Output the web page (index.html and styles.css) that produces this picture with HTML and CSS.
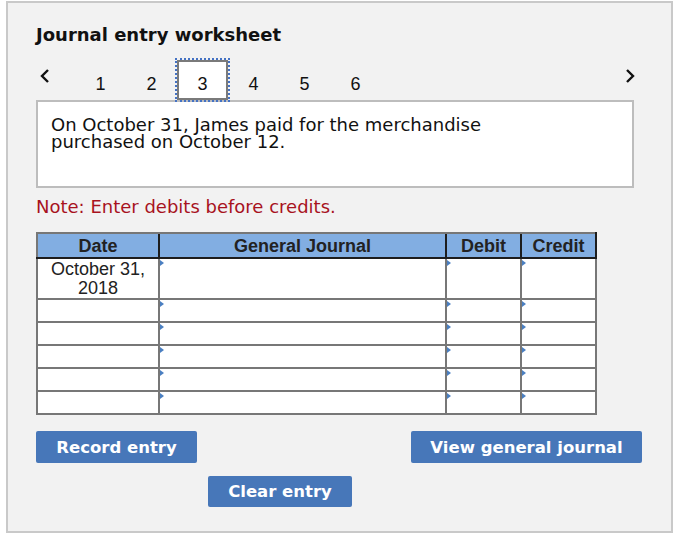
FILE: index.html
```html
<!DOCTYPE html>
<html>
<head>
<meta charset="utf-8">
<link rel="stylesheet" href="styles.css">
</head>
<body>
<div class="panel">
  <h1 class="title">Journal entry worksheet</h1>
  <div class="tabs">
    <span class="arrow"><svg width="12" height="16" viewBox="0 0 12 16"><polyline points="9,2 3,8 9,14" fill="none" stroke="#111" stroke-width="2.4"/></svg></span>
    <div class="nums">
      <span class="tab">1</span>
      <span class="tab">2</span>
      <span class="tab active">3</span>
      <span class="tab">4</span>
      <span class="tab">5</span>
      <span class="tab">6</span>
    </div>
    <span class="arrow right"><svg width="12" height="16" viewBox="0 0 12 16"><polyline points="3,2 9,8 3,14" fill="none" stroke="#111" stroke-width="2.4"/></svg></span>
  </div>
  <div class="question">On October 31, James paid for the merchandise<br>purchased on October 12.</div>
  <p class="note">Note: Enter debits before credits.</p>
  <table class="journal">
    <thead>
      <tr><th class="c-date">Date</th><th class="c-gj">General Journal</th><th class="c-dr">Debit</th><th class="c-cr">Credit</th></tr>
    </thead>
    <tbody>
      <tr class="first"><td class="date">October 31,<br>2018</td><td><i class="tri"></i></td><td><i class="tri"></i></td><td><i class="tri"></i></td></tr>
      <tr><td></td><td><i class="tri"></i></td><td><i class="tri"></i></td><td><i class="tri"></i></td></tr>
      <tr><td></td><td><i class="tri"></i></td><td><i class="tri"></i></td><td><i class="tri"></i></td></tr>
      <tr><td></td><td><i class="tri"></i></td><td><i class="tri"></i></td><td><i class="tri"></i></td></tr>
      <tr><td></td><td><i class="tri"></i></td><td><i class="tri"></i></td><td><i class="tri"></i></td></tr>
      <tr><td></td><td><i class="tri"></i></td><td><i class="tri"></i></td><td><i class="tri"></i></td></tr>
    </tbody>
  </table>
  <div class="actions">
    <button class="btn record">Record entry</button>
    <button class="btn view">View general journal</button>
  </div>
  <div class="actions2">
    <button class="btn clear">Clear entry</button>
  </div>
</div>
</body>
</html>
```
FILE: styles.css
```css
html, body { margin: 0; padding: 0; background: #fff; }
body { width: 678px; height: 534px; overflow: hidden; }
.panel {
  box-sizing: border-box;
  margin: 1px 0 0 6px;
  width: 667px;
  height: 532px;
  border: 2px solid #c9c9c9;
  background: #f2f2f2;
  padding: 0 0 0 28px;
  font-family: "DejaVu Sans", Verdana, sans-serif;
}
.title {
  margin: 0;
  padding-top: 21px;
  font-size: 18px;
  line-height: 22px;
  font-weight: bold;
  color: #111;
}
.tabs {
  display: flex;
  align-items: flex-start;
  height: 41px;
  margin-top: 13px;
  width: 600px;
  font-family: "Liberation Sans", Arial, sans-serif;
}
.arrow {
  width: 12px;
  height: 16px;
  margin-left: 3px;
  margin-top: 9px;
}
.arrow svg { display: block; }
.arrow.right { margin-left: auto; margin-right: 0; }
.nums { display: flex; margin-left: 24px; }
.tab {
  box-sizing: border-box;
  width: 51px;
  height: 41px;
  text-align: center;
  font-size: 18px;
  line-height: 20px;
  padding-top: 15px;
  color: #111;
}
.tab.active {
  position: relative;
  z-index: 2;
  width: 51px;
  height: 40px;
  margin-top: 1px;
  background: #fff;
  border: 2px solid #7a7a7a;
  outline: 2px dotted #4472c4;
  outline-offset: 0;
  padding-top: 12px;
}
.question {
  box-sizing: border-box;
  width: 598px;
  height: 88px;
  background: #fff;
  border: 2px solid #bdbdbd;
  padding: 14px 13px 0;
  font-size: 18px;
  line-height: 17px;
  color: #111;
}
.note {
  margin: 8px 0 0;
  font-size: 18px;
  line-height: 22px;
  color: #a8121e;
}
.journal {
  margin-top: 14px;
  border-collapse: collapse;
  border: 2px solid #777;
  font-family: "Liberation Sans", Arial, sans-serif;
  font-size: 18px;
  width: 560px;
  table-layout: fixed;
}
.journal th {
  background: #82aee2;
  color: #222;
  font-weight: bold;
  height: 23px;
  padding: 0;
  line-height: 22px;
  border-left: 2px solid #1d1d1d;
  border-bottom: 2px solid #1d1d1d;
  border-top: 2px solid #777;
}
.journal th:first-child { border-left: 2px solid #777; }
.journal th:last-child { border-right: 2px solid #1d1d1d; }
.c-date { width: 120px; }
.c-gj { width: 285px; }
.c-dr { width: 73px; }
.c-cr { width: 73px; }
.journal td {
  background: #fff;
  border: 2px solid #777;
  height: 21px;
  padding: 0;
  vertical-align: top;
  position: relative;
}
.journal tr.first td { height: 38px; }
.journal td.date {
  text-align: center;
  line-height: 19px;
  color: #222;
  padding-top: 1px;
  height: 37px;
}
.tri {
  position: absolute;
  left: 0;
  top: 1px;
  width: 0;
  height: 0;
  border-top: 3px solid transparent;
  border-bottom: 3px solid transparent;
  border-left: 4px solid #4a7fc1;
}
.actions {
  display: flex;
  justify-content: space-between;
  width: 606px;
  margin-top: 16px;
}
.btn {
  box-sizing: border-box;
  height: 32px;
  border: none;
  border-radius: 2px;
  background: #4777b9;
  color: #fff;
  font-family: "DejaVu Sans", Verdana, sans-serif;
  font-weight: bold;
  font-size: 16.5px;
  padding: 0;
}
.record { width: 161px; }
.view { width: 231px; }
.actions2 { margin-top: 13px; padding-left: 172px; }
.clear { width: 144px; height: 31px; }
```
